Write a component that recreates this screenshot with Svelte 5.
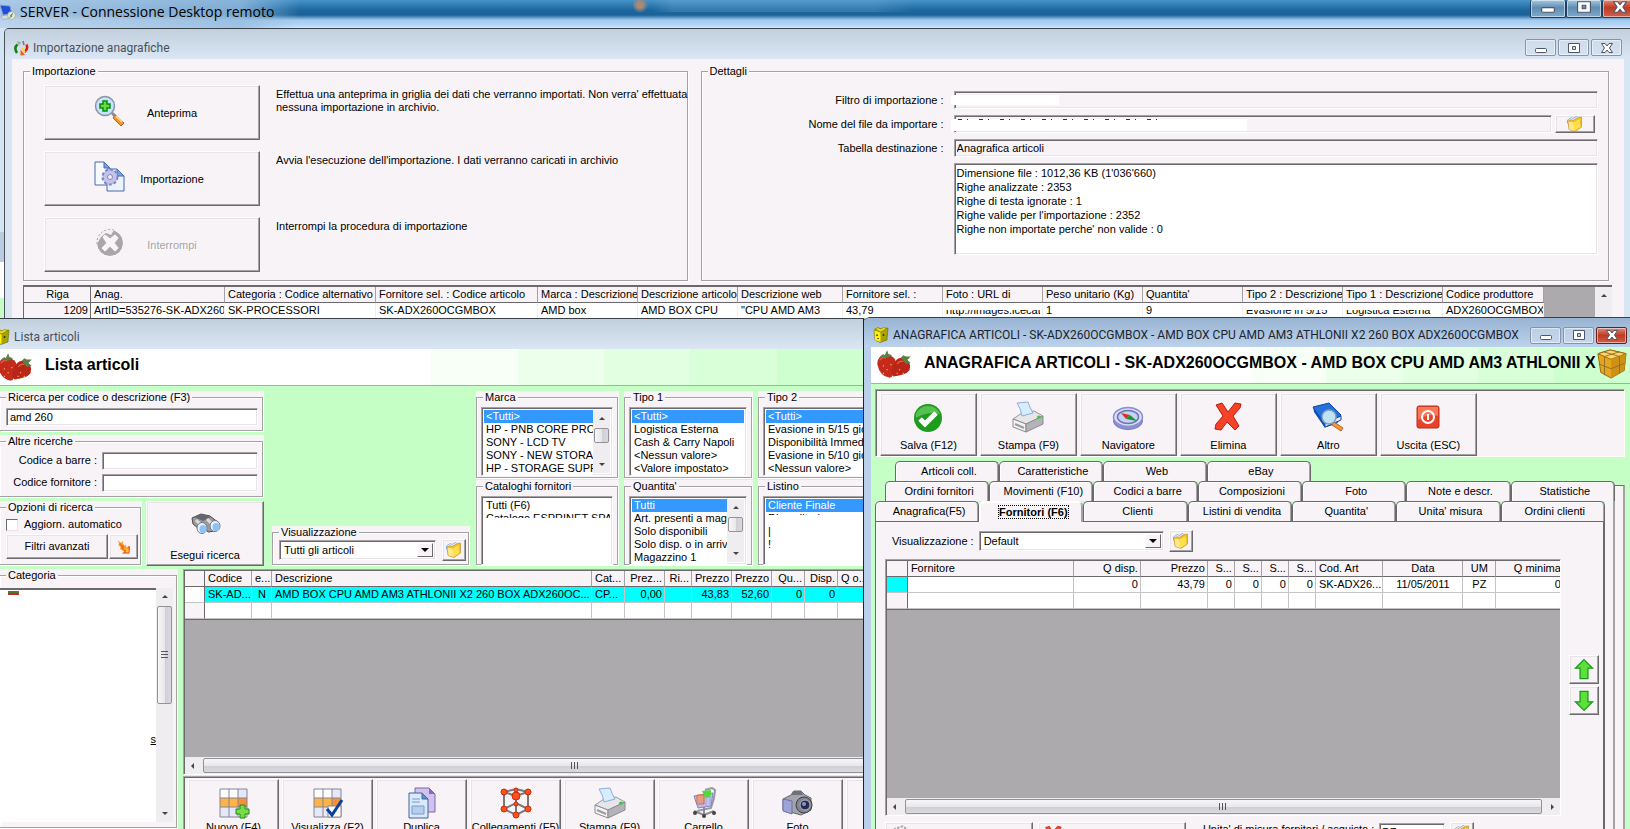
<script>
  const importCols = [
    { label: 'Riga', width: 67, value: '1209', kind: 'row-id' },
    { label: 'Anag.', width: 134, value: 'ArtID=535276-SK-ADX260' },
    { label: 'Categoria : Codice alternativo', width: 151, value: 'SK-PROCESSORI' },
    { label: 'Fornitore sel. : Codice articolo', width: 162, value: 'SK-ADX260OCGMBOX' },
    { label: 'Marca : Descrizione', width: 100, value: 'AMD box' },
    { label: 'Descrizione articolo', width: 100, value: 'AMD BOX CPU' },
    { label: 'Descrizione web', width: 105, value: '"CPU AMD AM3' },
    { label: 'Fornitore sel. :', width: 100, value: '43,79' },
    { label: 'Foto : URL di', width: 100, value: 'http://images.icecat', kind: 'covered' },
    { label: 'Peso unitario (Kg)', width: 100, value: '1' },
    { label: "Quantita'", width: 100, value: '9' },
    { label: 'Tipo 2 : Descrizione', width: 100, value: 'Evasione in 5/15', kind: 'covered' },
    { label: 'Tipo 1 : Descrizione', width: 100, value: 'Logistica Esterna', kind: 'covered' },
    { label: 'Codice produttore', width: 101, value: 'ADX260OCGMBOX' }
  ];

  const articleCols = [
    { label: '', width: 20, value: '' },
    { label: 'Codice', width: 47, value: 'SK-AD...' },
    { label: 'e...', width: 20, value: 'N', align: 'center' },
    { label: 'Descrizione', width: 320, value: 'AMD BOX CPU AMD AM3 ATHLONII X2 260 BOX ADX260OC...' },
    { label: 'Cat...', width: 33, value: 'CP...' },
    { label: 'Prez...', width: 40, value: '0,00', align: 'right' },
    { label: 'Ri...', width: 27, value: '', align: 'right' },
    { label: 'Prezzo', width: 40, value: '43,83', align: 'right' },
    { label: 'Prezzo', width: 40, value: '52,60', align: 'right' },
    { label: 'Qu...', width: 33, value: '0', align: 'right' },
    { label: 'Disp.', width: 33, value: '0', align: 'right' },
    { label: 'Q o...', width: 40, value: '', align: 'left' }
  ];

  const supplierCols = [
    { label: '', width: 21, value: '' },
    { label: 'Fornitore', width: 166, value: '' },
    { label: 'Q disp.', width: 67, value: '0', align: 'right' },
    { label: 'Prezzo', width: 67, value: '43,79', align: 'right' },
    { label: 'S...', width: 27, value: '0', align: 'right' },
    { label: 'S...', width: 27, value: '0', align: 'right' },
    { label: 'S...', width: 27, value: '0', align: 'right' },
    { label: 'S...', width: 27, value: '0', align: 'right' },
    { label: 'Cod. Art', width: 67, value: 'SK-ADX26...' },
    { label: 'Data', width: 80, value: '11/05/2011', align: 'center' },
    { label: 'UM', width: 33, value: 'PZ', align: 'center' },
    { label: 'Q minima', width: 68, value: '0', align: 'right' }
  ];

  const actions = [
    { icon: 'zoom', label: 'Anteprima', text: "Effettua una anteprima in griglia dei dati che verranno importati. Non verra' effettuata nessuna importazione in archivio." },
    { icon: 'import', label: 'Importazione', text: "Avvia l'esecuzione dell'importazione. I dati verranno caricati in archivio" },
    { icon: 'stop', label: 'Interrompi', text: 'Interrompi la procedura di importazione', disabled: true }
  ];

  const filters = [
    { name: 'Marca', scroll: true, options: ['<Tutti>', 'HP - PNB CORE PRODUCT', 'SONY - LCD TV', 'SONY - NEW STORAGE', 'HP - STORAGE SUPPORT'] },
    { name: 'Tipo 1', options: ['<Tutti>', 'Logistica Esterna', 'Cash & Carry Napoli', '<Nessun valore>', '<Valore impostato>'] },
    { name: 'Tipo 2', options: ['<Tutti>', 'Evasione in 5/15 giorni', 'Disponibilità Immediata', 'Evasione in 5/10 giorni', '<Nessun valore>'] },
    { name: 'Cataloghi fornitori', plain: true, cover: 'low', options: ['Tutti (F6)', 'Catalogo ESPRINET SPA'] },
    { name: "Quantita'", scroll: true, options: ['Tutti', 'Art. presenti a magazzino', 'Solo disponibili', 'Solo disp. o in arrivo', 'Magazzino 1'] },
    { name: 'Listino', cover: 'high', options: ['Cliente Finale', 'Rivenditori', '|', '!'] }
  ];

  const listTools = [
    { icon: 'gridadd', label: 'Nuovo (F4)' },
    { icon: 'gridcheck', label: 'Visualizza (F2)' },
    { icon: 'copy', label: 'Duplica' },
    { icon: 'nodes', label: 'Collegamenti (F5)' },
    { icon: 'printer', label: 'Stampa (F9)' },
    { icon: 'cart', label: 'Carrello' },
    { icon: 'camera', label: 'Foto' },
    { icon: '', label: '' }
  ];

  const cardTools = [
    { icon: 'ok', label: 'Salva (F12)' },
    { icon: 'printer', label: 'Stampa (F9)' },
    { icon: 'compass', label: 'Navigatore' },
    { icon: 'delete', label: 'Elimina' },
    { icon: 'book', label: 'Altro' },
    { icon: 'power', label: 'Uscita (ESC)' }
  ];

  const tabsBack = ['Articoli coll.', 'Caratteristiche', 'Web', 'eBay'];
  const tabsMiddle = ['Ordini fornitori', 'Movimenti (F10)', 'Codici a barre', 'Composizioni', 'Foto', 'Note e descr.', 'Statistiche'];
  const tabsFront = ['Anagrafica(F5)', 'Fornitori (F6)', 'Clienti', 'Listini di vendita', "Quantita'", "Unita' misura", 'Ordini clienti'];
  let activeTab = $state('Fornitori (F6)');

  const report = [
    "Dimensione file : 1012,36 KB (1'036'660)",
    'Righe analizzate : 2353',
    'Righe di testa ignorate : 1',
    "Righe valide per l'importazione : 2352",
    "Righe non importate perche' non valide : 0"
  ].join('\n');
</script>

{#snippet icon(name)}
  <svg class="icon" viewBox={name === 'berries' ? '0 0 29 24' : '0 0 32 32'} aria-hidden="true">
    {#if name === 'zoom'}
      <path d="M18 18l4 4" stroke="#8a8a94" stroke-width="3" />
      <path d="M21 20l9 8-3 3-8-8z" fill="#f79028" stroke="#b8622a" />
      <path d="M22 21l6 6" stroke="#ffd08a" stroke-width="2" />
      <circle cx="11" cy="11" r="9.500" fill="#c4e4fa" stroke="#8d93a8" stroke-width="1.500" />
      <path d="M9 6h4v3h3v4h-3v3H9v-3H6V9h3z" fill="#66dd44" stroke="#0a8a10" stroke-width="1.500" />
    {:else if name === 'import'}
      <path d="M1 1h9l6 6v17H1z" fill="#f4faff" stroke="#4a68ae" />
      <path d="M13 8h10l7 7v15H13z" fill="#eaf3ff" stroke="#4a68ae" />
      <path d="M10 1v6h6zM23 8v7h7z" fill="#6ea8dc" stroke="#4a68ae" />
      <circle cx="16" cy="16" r="7.500" fill="#c0c0e6" stroke="#8484bc" stroke-width="2" stroke-dasharray="3 2" />
      <circle cx="16" cy="16" r="6" fill="#c4c4ea" />
      <circle cx="16" cy="16" r="2.500" fill="#eef0fb" stroke="#8484bc" />
    {:else if name === 'stop'}
      <circle cx="16" cy="16" r="13.500" fill="#a9a6a9" stroke="#fff" />
      <path d="M3 17A13 13 0 0 1 20 3l-3 5-5-2-5 4z" fill="#f4f0f4" />
      <path d="M3 17A13 13 0 0 1 22 4" fill="none" stroke="#a5a2a5" stroke-dasharray="2 2" />
      <path d="M8 10l3-3 5 4 5-4 4 4-4 5 4 5-4 4-5-5-5 5-4-4 5-5z" fill="#f8f4f8" stroke="#b5b2b5" />
    {:else if name === 'binocular'}
      <path d="M3 8l9-4 9 2 9 7-4 8-7 1-4-5-5 2-6-5z" fill="#9b9b9f" stroke="#4b4b50" />
      <path d="M5 7l8-3 9 3-8 4z" fill="#66666c" />
      <path d="M7 10l7 7M18 9l6 6" stroke="#dcdce0" stroke-width="3" />
      <ellipse cx="13" cy="18" rx="5" ry="5.500" fill="#e6f2fc" stroke="#77777f" />
      <ellipse cx="26" cy="16" rx="5" ry="5.500" fill="#e6f2fc" stroke="#77777f" />
      <ellipse cx="14" cy="19" rx="3.500" ry="4" fill="#8fc2f4" />
      <ellipse cx="27" cy="17" rx="3.500" ry="4" fill="#8fc2f4" />
    {:else if name === 'spark'}
      <path d="M3 2l7 6 3-4 3 9 4-1 1 5 7-3-1 15H12l4-4-8-5 1-4-5-4 3-2z" fill="#ffa52a" />
      <path d="M3 2l9 10 4 1 1 4 6 3 1-5 4-1-1 15H12l6-5-8-5 1-4-5-5 2-2z" fill="#f8651e" />
      <path d="M13 17l8 6-2 3 6 1v-7" fill="#ffc93c" />
    {:else if name === 'folder'}
      <path d="M1 15V8l8-5 3 2 9-5" stroke="#86b1ee" stroke-width="2" fill="none" />
      <path d="M2 10l7-3 3 2 10-6 7-1v20l-13 9-12-4z" fill="#f0bd28" stroke="#a87a10" />
      <path d="M3 11l10 2 3 17-11-3z" fill="#ffe88a" />
      <path d="M13 13l12-7 2 16-12 8z" fill="#ffe04a" />
    {:else if name === 'gridadd' || name === 'gridcheck'}
      <path d="M2 2h27v28H2z" fill="#fdfdff" />
      <path d="M20 2h9v9h-9zM2 20h18v10H2z" fill="#e4e8fa" />
      <path d="M2 11h27v9H2z" fill="#ffb347" />
      <path d="M20 11h9v9h-9z" fill="#f99035" />
      <path d="M2 2h27v28H2zM2 11h27M2 20h27M11 2v28M20 2v28" fill="none" stroke="#858590" />
      {#if name === 'gridadd'}
        <path d="M22 18h5v4h4v5h-4v4h-5v-4h-4v-5h4z" fill="#7bdc45" stroke="#168a1a" />
      {:else}
        <path d="M16 19h13v11H16z" fill="#fff" stroke="#888" />
        <path d="M15 22l5 6 10-15" fill="none" stroke="#0b3f9e" stroke-width="3" />
      {/if}
    {:else if name === 'copy'}
      <path d="M9 1h14l6 6v18H9z" fill="#cfc2ec" stroke="#8061b0" />
      <path d="M23 1v6h6z" fill="#8a68bd" />
      <path d="M3 6h13l6 6v19H3z" fill="#d9e8fa" stroke="#44659e" />
      <path d="M16 6v6h6z" fill="#5f92cc" stroke="#44659e" />
      <path d="M6 12h8M6 15h8M6 19h12v8H6z" fill="#b6cdee" stroke="#7b9bc9" />
    {:else if name === 'nodes'}
      <path d="M4 5l12-3 12 3-12 4zM4 5v17l12 6 12-6V5M16 9v19M16 2v14M4 22l12-6 12 6" fill="none" stroke="#77787c" stroke-width="2" />
      <g fill="#ff5020" stroke="#c82a08">
        <circle cx="4" cy="5" r="3" /><circle cx="28" cy="5" r="3" /><circle cx="16" cy="3" r="2" />
        <circle cx="16" cy="9" r="4" /><circle cx="4" cy="22" r="3" /><circle cx="28" cy="22" r="3" />
        <circle cx="16" cy="17" r="2" /><circle cx="16" cy="28" r="3" />
      </g>
    {:else if name === 'printer'}
      <path d="M1 18l9-6 12-2 9 5-17 8z" fill="#e6e6e8" stroke="#9a9a9e" />
      <path d="M5 2l11-1q2 6 5 11l-11 3Q9 8 5 2z" fill="#d8ecff" stroke="#8baed6" />
      <path d="M1 18l13 5v8L1 26z" fill="#f3f3f4" stroke="#8c8c90" />
      <path d="M14 23l17-8v8l-17 8z" fill="#b4b4b8" stroke="#8c8c90" />
      <path d="M3 23l9 4" stroke="#9b9ba0" stroke-width="2" />
      <ellipse cx="27" cy="16" rx="2" ry="1.500" fill="#3cc63c" />
    {:else if name === 'cart'}
      <path d="M17 3l7-2 3 2-1 8-3 10-14 3" fill="none" stroke="#9798a0" stroke-width="2" />
      <path d="M6 9l19-3-2 13-13 2z" fill="#c1c0ee" stroke="#8482bd" />
      <path d="M9 8h7v9H9z" fill="#ff9868" stroke="#dd6433" />
      <path d="M14 4l9-1v7l-6 1z" fill="#58d447" />
      <path d="M10 10v10M14 10v10M18 10v9M22 8v10" stroke="#a6a5de" />
      <path d="M6 24l10 4 10-4M16 20v8" fill="none" stroke="#8c8c92" stroke-width="2" />
      <circle cx="7" cy="26" r="2" fill="#444" /><circle cx="16" cy="29" r="2" fill="#444" /><circle cx="26" cy="26" r="2" fill="#444" />
    {:else if name === 'camera'}
      <path d="M1 12l8-4 3-4h7l4 4 6 3v12l-10 5L1 23z" fill="#a3a4ac" stroke="#63646c" />
      <path d="M1 12l9 2v13l-9-3z" fill="#9da4d6" stroke="#6b71a6" />
      <path d="M11 4h8l2 4H9z" fill="#6f7078" />
      <circle cx="22" cy="18" r="8" fill="#83848d" stroke="#3f4048" />
      <circle cx="23" cy="18" r="5" fill="#26294a" stroke="#b9bac6" />
      <circle cx="22" cy="17" r="2" fill="#8296e0" />
    {:else if name === 'ok'}
      <circle cx="16" cy="17" r="14" fill="#1d9c1d" />
      <path d="M4 13a13 13 0 0 1 24 0q-12-3-24 4z" fill="#57c052" />
      <path d="M8 18l5 5L24 12" fill="none" stroke="#fff" stroke-width="5" />
    {:else if name === 'compass'}
      <ellipse cx="16" cy="20" rx="14.500" ry="8.500" fill="#8c90d4" stroke="#7478bb" />
      <ellipse cx="16" cy="16" rx="14.500" ry="9.500" fill="#d9dbf8" stroke="#8b8fd0" stroke-width="1.500" />
      <ellipse cx="16" cy="16" rx="10.500" ry="6.500" fill="#c3d3f4" stroke="#6d72b5" stroke-width="1.500" />
      <path d="M9 12l9 2-4 4z" fill="#e03020" />
      <path d="M25 20l-7-6-4 4z" fill="#17962a" />
    {:else if name === 'delete'}
      <path d="M4 4l6-2 6 9 7-9 6 1-1 4-7 8 6 10-4 4-8-8-6 8-6-1 1-5 7-8z" fill="#f5432a" stroke="#bd1c0c" />
    {:else if name === 'book'}
      <path d="M1 6l16-4 12 12-4 8-12 4z" fill="#2470dc" stroke="#0e479f" />
      <path d="M1 6l12 16v5L2 11z" fill="#0e4fb6" />
      <path d="M13 22l16-7v4l-16 7z" fill="#e8edf5" stroke="#0e479f" />
      <path d="M22 21l9 6-2 3-9-6z" fill="#f79a3c" stroke="#b8622a" />
      <circle cx="17" cy="16" r="7" fill="#bfe2f7" stroke="#7f9fbb" stroke-width="1.500" />
    {:else if name === 'power'}
      <rect x="5" y="5" width="22" height="22" rx="2" fill="#e8432a" stroke="#b92d18" />
      <path d="M6 6h20v9q-9-3-20 4z" fill="#f47a58" />
      <circle cx="16" cy="16" r="6" fill="none" stroke="#fff" stroke-width="2" />
      <path d="M16 13v6" stroke="#fff" stroke-width="2" />
    {:else if name === 'berries'}
      <path d="M1 12Q1 5 8 5q9 0 8 9-1 8-5 9Q3 22 1 12z" fill="#c52a1c" />
      <path d="M14 13q2-7 8-6 7 2 5 10-3 4-13 5-3-4 0-9z" fill="#b92517" />
      <path d="M3 9q2-3 5-2M17 12q2-3 5-2" stroke="#e0604a" fill="none" />
      <path d="M3 6l3-2 1 1 2-4 1 3 3 1-4 2zM20 7l2-2 2 1 4 0-3 3 3 2-4 1z" fill="#5c7f45" />
      <path d="M6 13v1M9 16v1M6 19v1M12 12v1M19 16v1M22 19v1M17 19v1" stroke="#f0a060" />
    {:else if name === 'box'}
      <path d="M1 5l13-4 17 4-2 18-14 8L4 25z" fill="#e6a51c" stroke="#96650c" />
      <path d="M1 5l14 6 16-6-17-4z" fill="#ffd567" stroke="#96650c" />
      <path d="M15 11v20l14-8 2-18z" fill="#cf9114" />
      <path d="M7 3l17 5v18M24 3L8 8v20M2 16l13 5 15-6" fill="none" stroke="#8a7030" />
    {:else if name === 'cube'}
      <path d="M2 6l8-4 7 2 13-2-2 24-14 5L4 26z" fill="#aaa200" stroke="#5c5800" />
      <path d="M3 7l12 4v19L4 26z" fill="#fff20a" />
      <path d="M4 4l6-3 5 3 6-3 7 2-13 7z" fill="#e8dc20" stroke="#6c6800" />
      <path d="M8 15v3M21 14v4M10 22v2" stroke="#333" stroke-width="3" />
    {:else if name === 'arrows'}
      <path d="M9 9Q1 15 8 26" fill="none" stroke="#167c16" stroke-width="5" />
      <path d="M8 2l9 3-6 6z" fill="#9ab49a" />
      <path d="M20 2l2 8" stroke="#777" stroke-width="3" />
      <path d="M27 9q4 9-4 15" fill="none" stroke="#dc1a10" stroke-width="5" />
      <path d="M15 19l9 11-9 1z" fill="#f25c20" />
      <path d="M18 16l6 8" stroke="#ffd21c" stroke-width="3" />
    {:else if name === 'remote'}
      <path d="M0 2l20 2 4 16-18 2z" fill="#1f4fd8" stroke="#8aa3d8" stroke-width="2" />
      <path d="M2 24l14-2 4 6-14 3z" fill="#d8dce4" stroke="#8b93a8" />
      <circle cx="23" cy="23" r="8" fill="#dfe4dc" stroke="#8a9a80" />
      <path d="M19 27l5-3-3-1 5-4" fill="none" stroke="#3c8a2c" stroke-width="2" />
    {:else if name === 'up'}
      <path d="M16 1l13 13h-7v16H10V14H3z" fill="#5ee03a" stroke="#1d9a1d" stroke-width="2" />
    {:else if name === 'down'}
      <path d="M16 31L3 18h7V2h12v16h7z" fill="#5ee03a" stroke="#1d9a1d" stroke-width="2" />
    {:else if name === 'grey'}
      <path d="M2 12l6-6 12-4 9 6-4 12z" fill="none" stroke="#a5a2a5" stroke-width="3" stroke-dasharray="4 2" />
    {/if}
  </svg>
{/snippet}

{#snippet winButtons()}
  <div class="win-buttons">
    <button type="button" aria-label="Riduci a icona">
      <svg viewBox="0 0 14 12"><rect x="1.500" y="6.500" width="11" height="4" rx="1" fill="#fff" stroke="#50566a" /></svg>
    </button>
    <button type="button" aria-label="Ingrandisci">
      <svg viewBox="0 0 14 12"><path d="M1.500 1.500h11v9h-11zM5.500 4.500v3h3v-3z" fill="#fff" fill-rule="evenodd" stroke="#50566a" /></svg>
    </button>
    <button type="button" class="close" aria-label="Chiudi">
      <svg viewBox="0 0 14 12"><path d="M1.500 1.500h3.500l2 2.500 2-2.500h3.500L9.500 6l3 4.500H9L7 8l-2 2.500H1.500l3-4.500z" fill="#fff" stroke="#50566a" /></svg>
    </button>
  </div>
{/snippet}

{#snippet vscroll()}
  <div class="vscroll" aria-hidden="true"><i class="tri up"></i><span class="thumb"></span><i class="tri dn"></i></div>
{/snippet}

{#snippet hscroll()}
  <div class="hscroll" aria-hidden="true"><i class="tri lf"></i><span class="thumb"></span><i class="tri rt"></i></div>
{/snippet}

{#snippet dataTable(cols, name)}
  <table class="grid {name}">
    <colgroup>
      {#each cols as col}<col style="width: {col.width}px" />{/each}
    </colgroup>
    <thead>
      <tr>{#each cols as col}<th class={col.align}>{col.label}</th>{/each}</tr>
    </thead>
    <tbody>
      <tr class="current">{#each cols as col}<td class="{col.align} {col.kind}"><span>{col.value}</span></td>{/each}</tr>
      {#if name !== 'imported'}
        <tr class="empty">{#each cols as col}<td class={col.align}></td>{/each}</tr>
      {/if}
    </tbody>
  </table>
{/snippet}

<div class="desktop">
  <header class="remote-bar">
    {@render icon('remote')}
    <span>SERVER - Connessione Desktop remoto</span>
    <i class="ghost" aria-hidden="true"></i>
    {@render winButtons()}
  </header>

  <section class="window import-window">
    <div class="title-bar">
      {@render icon('arrows')}
      <span>Importazione anagrafiche</span>
      {@render winButtons()}
    </div>
    <div class="import-body">
      <div class="import-groups">
        <fieldset>
          <legend>Importazione</legend>
          <div class="actions">
            {#each actions as action}
              <button type="button" class="bevel" disabled={action.disabled}>
                {@render icon(action.icon)}
                <span>{action.label}</span>
              </button>
              <p>{action.text}</p>
            {/each}
          </div>
        </fieldset>
        <fieldset>
          <legend>Dettagli</legend>
          <div class="details">
            <label for="filtro">Filtro di importazione :</label>
            <div class="field blanked"><input id="filtro" class="sunken" readonly /></div>
            <label for="file">Nome del file da importare :</label>
            <div class="field blanked long">
              <input id="file" class="sunken" readonly />
              <button type="button" class="bevel browse" aria-label="Sfoglia">{@render icon('folder')}</button>
            </div>
            <label for="tabella">Tabella destinazione :</label>
            <div class="field"><input id="tabella" class="sunken" value="Anagrafica articoli" readonly /></div>
            <textarea class="sunken" aria-label="Esito analisi" readonly value={report}></textarea>
          </div>
        </fieldset>
      </div>
      <div class="import-grid">
        {@render dataTable(importCols, 'imported')}
        <div class="vscroll" aria-hidden="true"><i class="tri up"></i></div>
      </div>
    </div>
  </section>

  <section class="window list-window">
    <div class="title-bar">
      {@render icon('cube')}
      <span>Lista articoli</span>
    </div>
    <div class="banner">
      {@render icon('berries')}
      <h1>Lista articoli</h1>
    </div>
    <div class="list-body">
      <div class="filters">
        <div class="search">
          <div class="panel">
            <fieldset>
              <legend>Ricerca per codice o descrizione (F3)</legend>
              <input class="sunken" aria-label="Ricerca per codice o descrizione" value="amd 260" />
            </fieldset>
          </div>
          <div class="panel">
            <fieldset>
              <legend>Altre ricerche</legend>
              <div class="codes">
                <label for="barre">Codice a barre :</label>
                <input id="barre" class="sunken" />
                <label for="codforn">Codice fornitore :</label>
                <input id="codforn" class="sunken" />
              </div>
            </fieldset>
          </div>
          <div class="search-run">
            <div class="panel">
              <fieldset>
                <legend>Opzioni di ricerca</legend>
                <label class="check"><input type="checkbox" />Aggiorn. automatico</label>
                <div class="pair">
                  <button type="button" class="bevel">Filtri avanzati</button>
                  <button type="button" class="bevel" aria-label="Azzera filtri">{@render icon('spark')}</button>
                </div>
              </fieldset>
            </div>
            <button type="button" class="bevel run">{@render icon('binocular')}<span>Esegui ricerca</span></button>
          </div>
        </div>

        <div class="panel view">
          <fieldset>
            <legend>Visualizzazione</legend>
            <div class="pair">
              <div class="combo sunken">
                <select aria-label="Visualizzazione"><option>Tutti gli articoli</option></select>
                <i class="drop"></i>
              </div>
              <button type="button" class="bevel square" aria-label="Apri">{@render icon('folder')}</button>
            </div>
          </fieldset>
        </div>

        <div class="lists">
          {#each filters as filter}
            <div class="panel">
              <fieldset>
                <legend>{filter.name}</legend>
                <div class="listbox sunken {filter.cover ?? ''}">
                  <select size="5" aria-label={filter.name}>
                    {#each filter.options as option, i}
                      <option selected={i === 0 && !filter.plain}>{option}</option>
                    {/each}
                  </select>
                  {#if filter.scroll}{@render vscroll()}{/if}
                </div>
              </fieldset>
            </div>
          {/each}
        </div>
      </div>

      <div class="results">
        <div class="panel category">
          <fieldset>
            <legend>Categoria</legend>
            <div class="tree">
              <div class="tree-list">
                <i class="berry"></i>
                <span>s</span>
              </div>
              {@render vscroll()}
            </div>
          </fieldset>
        </div>
        <div class="result-main">
          <div class="grid-frame">
            <div class="grid-space">{@render dataTable(articleCols, 'articles')}</div>
            {@render hscroll()}
          </div>
          <div class="toolbar">
            {#each listTools as tool}
              <button type="button" class="bevel" aria-label={tool.label || 'Altro'}>
                {@render icon(tool.icon)}
                <span>{tool.label}</span>
              </button>
            {/each}
          </div>
        </div>
      </div>
    </div>
  </section>

  <section class="window card-window">
    <div class="title-bar">
      {@render icon('cube')}
      <span>ANAGRAFICA ARTICOLI - SK-ADX260OCGMBOX - AMD BOX CPU AMD AM3 ATHLONII X2 260 BOX ADX260OCGMBOX</span>
      {@render winButtons()}
    </div>
    <div class="card-client">
      <div class="banner">
        {@render icon('berries')}
        <h1>ANAGRAFICA ARTICOLI - SK-ADX260OCGMBOX - AMD BOX CPU AMD AM3 ATHLONII X</h1>
        {@render icon('box')}
      </div>
      <div class="card-body">
        <div class="toolbar">
          {#each cardTools as tool}
            <button type="button" class="bevel">
              {@render icon(tool.icon)}
              <span>{tool.label}</span>
            </button>
          {/each}
        </div>

        <div class="tabs back">
          {#each tabsBack as tab}<button type="button" onclick={() => (activeTab = tab)}>{tab}</button>{/each}
        </div>
        <div class="deck">
          <div class="deck-main">
            <div class="tabs middle">
              {#each tabsMiddle as tab}<button type="button" onclick={() => (activeTab = tab)}>{tab}</button>{/each}
            </div>
            <div class="deck">
              <div class="deck-main">
                <div class="tabs front">
                  {#each tabsFront as tab}
                    <button type="button" class:active={activeTab === tab} onclick={() => (activeTab = tab)}><span>{tab}</span></button>
                  {/each}
                </div>
                <div class="page">
                  <div class="view-row">
                    <label for="vista">Visualizzazione :</label>
                    <div class="combo sunken">
                      <select id="vista"><option>Default</option></select>
                      <i class="drop"></i>
                    </div>
                    <button type="button" class="bevel square" aria-label="Apri">{@render icon('folder')}</button>
                  </div>
                  <div class="suppliers">
                    <div class="grid-frame">
                      <div class="grid-space">{@render dataTable(supplierCols, 'supply')}</div>
                      {@render hscroll()}
                    </div>
                    <div class="movers">
                      <button type="button" class="bevel" aria-label="Su">{@render icon('up')}</button>
                      <button type="button" class="bevel" aria-label="Giu'">{@render icon('down')}</button>
                    </div>
                  </div>
                  <div class="card-foot">
                    <button type="button" class="bevel" aria-label="Aggiungi" disabled>{@render icon('grey')}</button>
                    <button type="button" class="bevel" aria-label="Elimina fornitore">{@render icon('delete')}</button>
                    <label for="um">Unita' di misura fornitori / acquisto :</label>
                    <input id="um" class="sunken" value="PZ" />
                    <button type="button" class="bevel square" aria-label="Apri">{@render icon('folder')}</button>
                  </div>
                </div>
              </div>
              <div class="edge"></div>
            </div>
          </div>
          <div class="edge topped"></div>
        </div>
      </div>
    </div>
  </section>
</div>

<style>
  :global(body) {
    margin: 0;
    overflow: hidden;
  }

  .desktop {
    --face: #f7f3f7;
    --shade: #a5a2a5;
    --dark: #6b696b;
    --light: #e7e3e7;
    --green: #c6ffc6;
    position: relative;
    height: 100vh;
    overflow: hidden;
    background: linear-gradient(#d3e4f5 232px, #b9cbe0 232px 262px, #fff 262px 298px, var(--green) 298px);
    color: #000;
    font: 11px/13px "Liberation Sans", Arial, sans-serif;
  }

  .desktop * {
    box-sizing: border-box;
  }

  button, input, select, textarea {
    margin: 0;
    padding: 0;
    border: 0;
    border-radius: 0;
    color: inherit;
    font: inherit;
    outline: none;
  }

  .icon {
    display: block;
    flex: none;
    width: 32px;
    height: 32px;
  }

  p, h1 {
    margin: 0;
  }

  /* top level title bar */
  .remote-bar {
    position: relative;
    display: flex;
    align-items: center;
    height: 28px;
    padding-bottom: 4px;
    background:
      linear-gradient(to right, rgba(190, 212, 236, .85) 0, rgba(150, 188, 222, .8) 240px, transparent 300px),
      linear-gradient(#4793c9 0, #1d679f 10px, #1b6299 15px, #a3c9ec 20px, #b8d9fa 26px, #dcebfa 28px);
    font: 14px/20px "Open Sans", sans-serif;
  }

  .remote-bar .icon {
    width: 16px;
    height: 20px;
  }

  .remote-bar span {
    margin-left: 4px;
  }

  .ghost {
    position: absolute;
    left: 633px;
    top: 0;
    width: 280px;
    height: 12px;
    background:
      radial-gradient(circle at 7px 5px, #a98a72 3px, transparent 8px),
      linear-gradient(to right, transparent 20px, rgba(130, 180, 215, .25) 40px, rgba(130, 180, 215, .25) 240px, transparent);
  }

  .win-buttons {
    display: flex;
    flex: none;
    gap: 2px;
    margin-left: auto;
  }

  .win-buttons button {
    display: grid;
    place-items: center;
    width: 31px;
    height: 17px;
    border: 1px solid #8494b0;
    border-radius: 2px;
    background: rgba(210, 224, 240, .5);
    box-shadow: inset 0 0 0 1px rgba(255, 255, 255, .5);
  }

  .win-buttons svg {
    width: 14px;
    height: 12px;
  }

  .remote-bar .win-buttons {
    align-self: flex-start;
    gap: 0;
    margin-right: -8px;
  }

  .remote-bar .win-buttons button {
    place-items: start center;
    width: 36px;
    height: 18px;
    border-color: #1d3f60;
    border-top: 0;
    background: linear-gradient(#a7c8e2, #5f8db3 45%, #7fa9c9);
  }

  .remote-bar .win-buttons .close {
    background: linear-gradient(#dc8a7a, #c13a22 45%, #d0604a);
  }

  .remote-bar .win-buttons svg {
    width: 18px;
    height: 14px;
  }

  /* windows laid on the desktop */
  .window {
    position: absolute;
    display: flex;
    flex-direction: column;
    overflow: hidden;
    border-top: 1px solid #3a4048;
  }

  .title-bar {
    display: flex;
    align-items: center;
    flex: none;
    background: linear-gradient(#c2cfdd, #dae6f3);
    color: #48505a;
    font: 12px/16px Roboto, "Open Sans", sans-serif;
    white-space: nowrap;
  }

  .title-bar .icon {
    width: 16px;
    height: 16px;
  }

  .title-bar span {
    margin-left: 4px;
  }

  .import-window {
    top: 28px;
    left: 4px;
    right: 0;
    bottom: 0;
    padding: 0 6px 0 7px;
    border-left: 1px solid #4a4f58;
    border-radius: 5px 0 0 0;
    background: #d8e6f4;
  }

  .import-window .title-bar {
    height: 30px;
    margin: 0 -6px 0 -7px;
    padding: 7px 8px 0;
  }

  .import-body {
    padding: 6px 12px 0 11px;
    background: var(--face);
  }

  .import-groups {
    display: grid;
    grid-template-columns: 665fr 909fr;
    gap: 13px;
    padding-right: 3px;
  }

  fieldset {
    min-width: 0;
    margin: 0;
    padding: 0;
    border: 1px solid var(--shade);
    box-shadow: 1px 1px 0 #fff, inset 1px 1px 0 #fff;
  }

  legend {
    margin-left: 6px;
    padding: 0 2px;
    background: var(--face);
  }

  .bevel {
    border: 1px solid;
    border-color: #fff var(--dark) var(--dark) #fff;
    background: var(--face);
    box-shadow: inset -1px -1px 0 var(--shade), inset 1px 1px 0 var(--light);
  }

  .sunken {
    border: 1px solid;
    border-color: var(--shade) #fff #fff var(--shade);
    background: #fff;
    box-shadow: inset 1px 1px 0 var(--dark), inset -1px -1px 0 var(--light);
  }

  .actions {
    display: grid;
    grid-template-columns: 216px 1fr;
    grid-auto-rows: 55px;
    gap: 11px 16px;
    padding: 7px 0 8px 20px;
  }

  .actions .bevel {
    display: flex;
    align-items: center;
    padding: 0 0 4px 49px;
  }

  .actions .bevel span {
    width: 92px;
    padding-top: 6px;
    text-align: center;
  }

  .actions .bevel:disabled span {
    color: var(--shade);
    text-shadow: 1px 1px 0 #fff;
  }

  .actions p {
    margin-right: -12px;
    padding-top: 3px;
  }

  .details {
    display: grid;
    grid-template-columns: 242px 1fr;
    gap: 6px 10px;
    padding: 13px 10px 9px 0;
  }

  .details label {
    line-height: 18px;
    text-align: right;
  }

  .field {
    position: relative;
    display: flex;
    gap: 3px;
    height: 18px;
  }

  .field .sunken {
    flex: 1;
    min-width: 0;
    padding: 0 2px;
    background: var(--face);
  }

  .blanked::before {
    content: "";
    position: absolute;
    left: -3px;
    top: 4px;
    width: 108px;
    height: 10px;
    background: #fff;
  }

  .blanked.long::before {
    width: 296px;
    height: 12px;
  }

  /* what is left of the path above the blank strip */
  .blanked.long::after {
    content: "";
    position: absolute;
    left: 4px;
    top: 4px;
    width: 210px;
    height: 1px;
    background: repeating-linear-gradient(to right, #333 0 4px, transparent 4px 9px, #333 9px 10px, transparent 10px 21px);
  }

  .browse {
    display: grid;
    place-items: center;
    width: 40px;
    margin-right: 3px;
  }

  .browse .icon,
  .square .icon {
    width: 18px;
    height: 16px;
  }

  .details textarea {
    grid-column: 2;
    height: 92px;
    padding: 2px;
    line-height: 14px;
    resize: none;
  }

  /* tables */
  .grid {
    width: 0;
    table-layout: fixed;
    border-collapse: separate;
    border-spacing: 0;
    border-bottom: 1px solid var(--dark);
    background: #fff;
  }

  .grid th,
  .grid td {
    height: 16px;
    padding: 0 2px 0 3px;
    overflow: hidden;
    font-weight: normal;
    line-height: 15px;
    text-align: left;
    white-space: nowrap;
  }

  .grid th {
    border-right: 1px solid var(--shade);
    border-bottom: 1px solid var(--dark);
    background: var(--face);
  }

  .grid td {
    border-right: 1px solid #c6c3c6;
    border-bottom: 1px solid #c6c3c6;
  }

  .grid th:first-child,
  .grid td:first-child {
    border-right-color: var(--dark);
  }

  .grid .right {
    text-align: right;
  }

  .grid .center {
    text-align: center;
  }

  .import-grid {
    display: flex;
    align-items: flex-start;
    margin-top: 4px;
    border-top: 2px solid var(--dark);
    border-left: 1px solid var(--dark);
    background: #adaaad;
  }

  .imported th:first-child {
    text-align: center;
  }

  .imported td {
    border-right-color: #f0eef0;
  }

  .imported .row-id {
    border-right-color: var(--dark);
    background: var(--face);
    text-align: right;
  }

  .imported .covered span {
    display: block;
    clip-path: inset(7px 0 0 0);
  }

  .import-grid .vscroll {
    align-self: stretch;
    margin-left: auto;
  }

  .articles .current td:not(:first-child),
  .supply .current td:first-child {
    background: #0ff;
  }

  .empty td:first-child {
    background: var(--face);
  }

  .grid-frame {
    display: flex;
    flex-direction: column;
    min-width: 0;
    border: 1px solid;
    border-color: var(--shade) #fff #fff var(--shade);
    box-shadow: inset 1px 1px 0 var(--dark);
    padding: 1px 0 0 1px;
  }

  .grid-space {
    flex: 1;
    overflow: hidden;
    background: #adaaad;
  }

  /* scrollbars */
  .vscroll,
  .hscroll {
    display: flex;
    flex: none;
    align-items: center;
    background: #efedf0;
  }

  .vscroll {
    flex-direction: column;
    width: 17px;
    padding: 7px 0;
    gap: 8px;
  }

  .hscroll {
    height: 17px;
    padding: 0 6px;
    gap: 9px;
  }

  .tri {
    border: 3px solid transparent;
  }

  .tri.up { border-top: 0; border-bottom-color: #444; }
  .tri.dn { border-bottom: 0; border-top-color: #444; margin-top: auto; }
  .tri.lf { border-left: 0; border-right-color: #444; }
  .tri.rt { border-right: 0; border-left-color: #444; }

  .thumb {
    border: 1px solid #949299;
    border-radius: 2px;
    background: linear-gradient(to right, #f6f5f7, #eae8ec 50%, #cfced4 51%, #dad9de);
  }

  .vscroll .thumb {
    width: 15px;
    height: 15px;
  }

  .hscroll .thumb {
    flex: 1;
    height: 15px;
    background:
      repeating-linear-gradient(to right, #555 0 1px, transparent 1px 3px) 50% 50% / 8px 7px no-repeat,
      linear-gradient(#f6f5f7, #eae8ec 50%, #cfced4 51%, #dad9de);
  }

  /* article list */
  .list-window {
    top: 318px;
    left: 0;
    bottom: 0;
    width: 53%;
    border-right: 1px solid #222;
  }

  .list-window .title-bar {
    height: 30px;
    padding-top: 6px;
  }

  .list-window .title-bar .icon {
    margin-left: -6px;
  }

  .banner {
    display: flex;
    flex: none;
    align-items: center;
    height: 37px;
    border-bottom: 1px solid #adaaad;
    background: linear-gradient(to right, #fff 50%, #f7fff7 50% 60%, #ebffeb 60% 70%, #e2ffe2 70% 80%, #d9ffd9 80% 90%, #ceffce 90%);
  }

  .banner .icon:first-child {
    width: 36px;
    height: 30px;
  }

  .banner h1 {
    margin-left: 12px;
    padding-bottom: 4px;
    font-size: 16px;
    line-height: 20px;
    white-space: nowrap;
  }

  .list-window .banner .icon {
    margin-left: -3px;
  }

  .list-body {
    display: flex;
    flex: 1;
    flex-direction: column;
    min-height: 0;
    padding-top: 5px;
    background: var(--green);
  }

  .panel {
    min-width: 0;
    padding: 0 1px 1px 0;
    background: var(--face);
  }

  .panel fieldset {
    height: 100%;
  }

  .filters {
    display: flex;
    flex: none;
    height: 175px;
  }

  .search {
    display: flex;
    flex-direction: column;
    justify-content: space-between;
    width: 264px;
  }

  .search fieldset,
  .category fieldset {
    border-left: 0;
  }

  .search .sunken {
    height: 18px;
    padding: 0 3px;
  }

  .search > .panel:first-child {
    padding-bottom: 0;
  }

  .search > .panel:first-child .sunken {
    display: block;
    width: 252px;
    margin: 4px 0 4px 6px;
  }

  .codes {
    display: grid;
    grid-template-columns: 97px 156px;
    align-items: center;
    gap: 4px 5px;
    padding: 4px 0 4px;
  }

  .codes label {
    text-align: right;
  }

  .search-run {
    display: flex;
    gap: 4px;
  }

  .search-run .panel {
    width: 142px;
  }

  .check {
    display: flex;
    align-items: center;
    gap: 6px;
    height: 17px;
    margin: 2px 0 1px 6px;
  }

  .check input {
    width: 12px;
    height: 12px;
    appearance: none;
    border: 1px solid;
    border-color: var(--dark) var(--light) var(--light) var(--dark);
    background: #fff;
  }

  .pair {
    display: flex;
  }

  .search .pair {
    gap: 1px;
    height: 25px;
    margin: 0 0 5px 6px;
  }

  .pair .bevel:first-child {
    width: 102px;
  }

  .search .pair .bevel:last-child {
    display: grid;
    place-items: center;
    width: 29px;
  }

  .search .pair .icon {
    width: 16px;
    height: 16px;
  }

  .run {
    display: flex;
    flex: 1;
    flex-direction: column;
    align-items: center;
    justify-content: space-between;
    padding: 8px 0 3px;
  }

  .view {
    align-self: flex-end;
    width: 198px;
    height: 40px;
    margin-left: 8px;
  }

  .view .pair {
    align-items: center;
    gap: 6px;
    margin-left: 6px;
  }

  .view .combo {
    width: 157px;
  }

  .combo {
    display: flex;
    height: 20px;
    padding: 2px;
  }

  .combo select {
    flex: 1;
    min-width: 0;
    padding-left: 2px;
    appearance: none;
    background: #fff;
  }

  .drop {
    display: grid;
    place-items: center;
    width: 16px;
    border: 1px solid;
    border-color: #fff var(--dark) var(--dark) #fff;
    background: var(--face);
  }

  .drop::before {
    content: "";
    border: 4px solid transparent;
    border-top-color: #000;
    border-bottom: 0;
  }

  .square {
    display: grid;
    place-items: center;
    width: 24px;
    height: 22px;
  }

  .lists {
    display: grid;
    flex: 1;
    grid-template-columns: 143px 129px minmax(130px, 1fr);
    grid-template-rows: 88px 86px;
    column-gap: 5px;
    row-gap: 1px;
    min-width: 0;
    margin-left: 6px;
    overflow: hidden;
  }

  .listbox {
    position: relative;
    display: flex;
    height: 69px;
    margin: 3px 4px 0;
    padding: 2px;
  }

  .listbox select {
    flex: 1;
    min-width: 0;
    height: 65px;
    overflow: hidden;
    background: #fff;
    scrollbar-width: none;
  }

  .listbox option {
    min-height: 13px;
    padding: 0 0 0 2px;
    line-height: 13px;
  }

  .listbox option:checked {
    background: #39f linear-gradient(#39f, #39f);
    -webkit-text-fill-color: #fff;
  }

  /* lines partly hidden in the supplier and price lists */
  .low::after,
  .high::after {
    content: "";
    position: absolute;
    left: 2px;
    right: 2px;
    top: 21px;
    height: 8px;
    background: #fff;
  }

  .high::after {
    top: 18px;
    height: 10px;
  }

  .results {
    display: flex;
    flex: 1;
    gap: 5px;
    min-height: 0;
    margin-top: 3px;
  }

  .category {
    width: 178px;
  }

  .tree {
    display: flex;
    height: 234px;
    margin: 6px 3px 0 0;
  }

  .tree-list {
    flex: 1;
    padding-top: 1px;
    border-top: 2px solid var(--dark);
    background: #fff;
    text-align: right;
    text-decoration: underline;
  }

  .tree-list span {
    display: block;
    margin-top: 138px;
  }

  .berry {
    display: block;
    width: 11px;
    height: 4px;
    margin-left: 8px;
    background: linear-gradient(#4f7a35 50%, #c52a1c 50%);
  }

  .tree .thumb {
    height: 98px;
    background:
      repeating-linear-gradient(#555 0 1px, transparent 1px 3px) 50% 50% / 7px 8px no-repeat,
      linear-gradient(to right, #f6f5f7, #eae8ec 50%, #cfced4 51%, #dad9de);
  }

  .result-main {
    display: flex;
    flex: 1;
    flex-direction: column;
    gap: 1px;
    min-width: 0;
    margin-right: -104px;
    overflow: hidden;
  }

  .result-main .grid-frame {
    flex: none;
    height: 206px;
  }

  .toolbar {
    display: flex;
    flex: none;
    gap: 3px;
    padding: 2px 4px 0;
    border: 1px solid;
    border-color: var(--shade) #fff #fff var(--shade);
    background: var(--face);
    box-shadow: inset 1px 1px 0 var(--dark);
    overflow: hidden;
  }

  .toolbar .bevel {
    display: flex;
    flex: none;
    flex-direction: column;
    align-items: center;
    justify-content: space-between;
    width: 91px;
    height: 60px;
    padding: 7px 0 4px;
    white-space: nowrap;
  }

  /* article card */
  .card-window {
    top: 317px;
    left: 53%;
    right: 0;
    bottom: 0;
    padding-left: 7px;
    border-radius: 6px 0 0 0;
    background: #b9cfea;
  }

  .card-window .title-bar {
    height: 29px;
    margin-left: -7px;
    padding: 5px 3px 0 9px;
    background: linear-gradient(#98b4d2, #bcd2ec);
    color: #1c242e;
  }

  .card-window .title-bar .close {
    border-color: #6a1f1a;
    background: linear-gradient(#dc8a7a, #c13a22 50%, #d0604a);
  }

  .card-client {
    display: flex;
    flex: 1;
    flex-direction: column;
    min-height: 0;
    background: var(--green);
  }

  .card-window .banner {
    padding: 0 3px 2px 5px;
  }

  .card-window .banner .icon:last-child {
    width: 30px;
    margin-left: auto;
  }

  .card-window .banner h1 {
    padding-bottom: 2px;
  }

  .card-body {
    padding: 5px 5px 0 4px;
  }

  .card-window .toolbar {
    height: 68px;
    padding: 3px 4px 0;
  }

  .card-window .toolbar .bevel {
    width: 97px;
    height: 63px;
    padding-bottom: 3px;
  }

  .tabs {
    display: flex;
  }

  .tabs button {
    flex: 1;
    height: 20px;
    padding-left: 4px;
    border: 1px solid var(--dark);
    border-bottom: 0;
    border-radius: 5px 5px 0 0;
    background: var(--face);
    box-shadow: inset 1px 1px 0 #fff, inset -1px 0 0 var(--shade);
    white-space: nowrap;
  }

  .back {
    margin: 4px 0 0 20px;
  }

  .back button {
    flex: none;
    width: 104px;
  }

  .middle {
    margin-left: 10px;
  }

  .tabs .active {
    position: relative;
    height: 21px;
    margin-bottom: -1px;
    border-color: #fff var(--shade) #fff #fff;
    font-weight: bold;
  }

  .active span {
    outline: 1px dotted #000;
  }

  .deck {
    display: flex;
  }

  .deck-main {
    flex: 1;
    min-width: 0;
  }

  .edge {
    width: 10px;
    border-right: 2px solid var(--shade);
    background: var(--face);
  }

  .topped {
    margin-top: 4px;
    border-top: 1px solid var(--dark);
  }

  .page {
    padding: 8px 4px 20px 9px;
    border: solid var(--dark);
    border-width: 1px 2px 0 1px;
    background: var(--face);
  }

  .view-row {
    display: flex;
    align-items: center;
    gap: 5px;
    padding-left: 7px;
  }

  .view-row .combo {
    width: 185px;
  }

  .suppliers {
    display: flex;
    gap: 8px;
    margin-top: 7px;
  }

  .suppliers .grid-frame {
    flex: 1;
    height: 257px;
  }

  .movers {
    display: flex;
    flex-direction: column;
    gap: 2px;
    padding-top: 96px;
  }

  .movers .bevel {
    display: grid;
    place-items: center;
    width: 30px;
    height: 29px;
  }

  .movers .icon {
    width: 22px;
    height: 21px;
  }

  .card-foot {
    display: flex;
    align-items: flex-start;
    gap: 5px;
    margin-top: 6px;
  }

  .card-foot .bevel:not(.square) {
    display: flex;
    align-items: flex-start;
    width: 148px;
    height: 32px;
    padding: 1px 0 0 4px;
  }

  .card-foot .bevel:not(.square) .icon {
    width: 20px;
    height: 22px;
  }

  .card-foot label {
    margin: 1px 0 0 12px;
  }

  .card-foot .sunken {
    width: 66px;
    height: 18px;
    margin-top: 1px;
    padding: 0 2px;
  }
</style>
